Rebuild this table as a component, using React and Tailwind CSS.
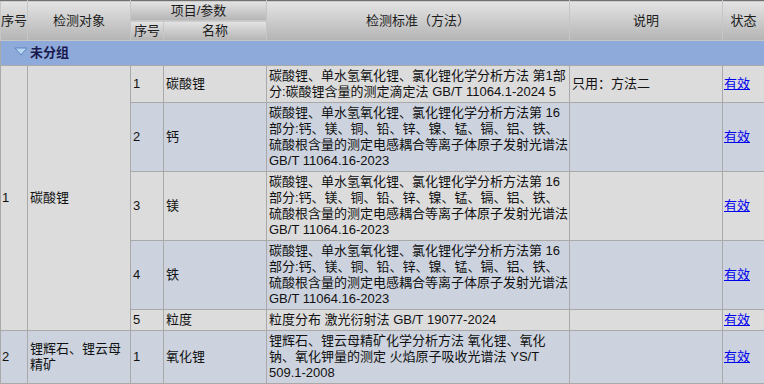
import React from 'react';

const LINK = '有效';

const gbLines = [
  '碳酸锂、单水氢氧化锂、氯化锂化学分析方法第 16',
  '部分:钙、镁、铜、铅、锌、镍、锰、镉、铝、铁、',
  '硫酸根含量的测定电感耦合等离子体原子发射光谱法',
  'GB/T 11064.16-2023',
];

const groups = [
  {
    no: '1',
    name: ['碳酸锂'],
    items: [
      { no: '1', name: '碳酸锂', std: ['碳酸锂、单水氢氧化锂、氯化锂化学分析方法 第1部', '分:碳酸锂含量的测定滴定法 GB/T 11064.1-2024 5'], note: '只用：方法二' },
      { no: '2', name: '钙', std: gbLines, note: '' },
      { no: '3', name: '镁', std: gbLines, note: '' },
      { no: '4', name: '铁', std: gbLines, note: '' },
      { no: '5', name: '粒度', std: ['粒度分布 激光衍射法 GB/T 19077-2024'], note: '' },
    ],
  },
  {
    no: '2',
    name: ['锂辉石、锂云母', '精矿'],
    items: [
      { no: '1', name: '氧化锂', std: ['锂辉石、锂云母精矿化学分析方法 氧化锂、氧化', '钠、氧化钾量的测定 火焰原子吸收光谱法 YS/T', '509.1-2008'], note: '' },
    ],
  },
];

const th = 'border border-[#c6c6c6] bg-linear-to-b from-[#e4e4e4] to-[#b4b4b4] font-normal text-[#1c1c1c] p-0 h-[20px] align-middle whitespace-nowrap';
const td = 'border border-[#a9a9a9] px-[2px] py-[2px] align-middle';

const Lines = ({ lines }) => (
  <>
    {lines.map((l, i) => (
      <div key={i} className="whitespace-nowrap">{l}</div>
    ))}
  </>
);

export default function App() {
  let stripe = 0;
  return (
    <div className="w-[764px] h-[384px] overflow-hidden bg-[#dcdcdc] text-[13px] leading-[16px] text-[#111] font-['Liberation_Sans','Noto_Sans_CJK_SC',sans-serif]">
      <table className="w-[764px] table-fixed border-collapse">
        <colgroup>
          <col className="w-[27px]" />
          <col className="w-[103px]" />
          <col className="w-[33px]" />
          <col className="w-[103px]" />
          <col className="w-[303px]" />
          <col className="w-[153px]" />
          <col className="w-[42px]" />
        </colgroup>
        <thead>
          <tr>
            <th rowSpan={2} className={`${th} border-t-[#707070] text-left overflow-visible`}>序号</th>
            <th rowSpan={2} className={`${th} border-t-[#707070]`}>检测对象</th>
            <th colSpan={2} className={`${th} border-t-[#707070]`}>项目/参数</th>
            <th rowSpan={2} className={`${th} border-t-[#707070]`}>检测标准（方法）</th>
            <th rowSpan={2} className={`${th} border-t-[#707070]`}>说明</th>
            <th rowSpan={2} className={`${th} border-t-[#707070]`}>状态</th>
          </tr>
          <tr>
            <th className={th}>序号</th>
            <th className={th}>名称</th>
          </tr>
        </thead>
        <tbody>
          <tr>
            <td colSpan={7} className="border border-[#a9a9a9] bg-[#8eaadb] h-[25px] p-0">
              <div className="flex items-center pl-[13px]">
                <svg width="14" height="9" viewBox="0 0 14 9" className="mr-[2px] -mt-[4px]">
                  <path d="M1 1 L13 1 L7 8 Z" fill="#b9d5f2" stroke="#5a86c0" strokeWidth="1" />
                </svg>
                <span className="font-bold text-[#1a1a4e]">未分组</span>
              </div>
            </td>
          </tr>
          {groups.map((g) =>
            g.items.map((it, i) => {
              const bg = stripe++ % 2 === 0 ? 'bg-[#dcdcdc]' : 'bg-[#ccd3de]';
              const gbg = g.no === '1' ? 'bg-[#dcdcdc]' : 'bg-[#ccd3de]';
              return (
                <tr key={g.no + '-' + it.no}>
                  {i === 0 && (
                    <>
                      <td rowSpan={g.items.length} className={`${td} ${gbg} pl-[1px]`}>{g.no}</td>
                      <td rowSpan={g.items.length} className={`${td} ${gbg}`}>
                        <Lines lines={g.name} />
                      </td>
                    </>
                  )}
                  <td className={`${td} ${bg}`}>{it.no}</td>
                  <td className={`${td} ${bg}`}>{it.name}</td>
                  <td className={`${td} ${bg}`}>
                    <Lines lines={it.std} />
                  </td>
                  <td className={`${td} ${bg}`}>{it.note}</td>
                  <td className={`${td} ${bg} pl-[1px]`}>
                    <a href="#" className="text-[#0000ee] underline">{LINK}</a>
                  </td>
                </tr>
              );
            })
          )}
        </tbody>
      </table>
    </div>
  );
}
